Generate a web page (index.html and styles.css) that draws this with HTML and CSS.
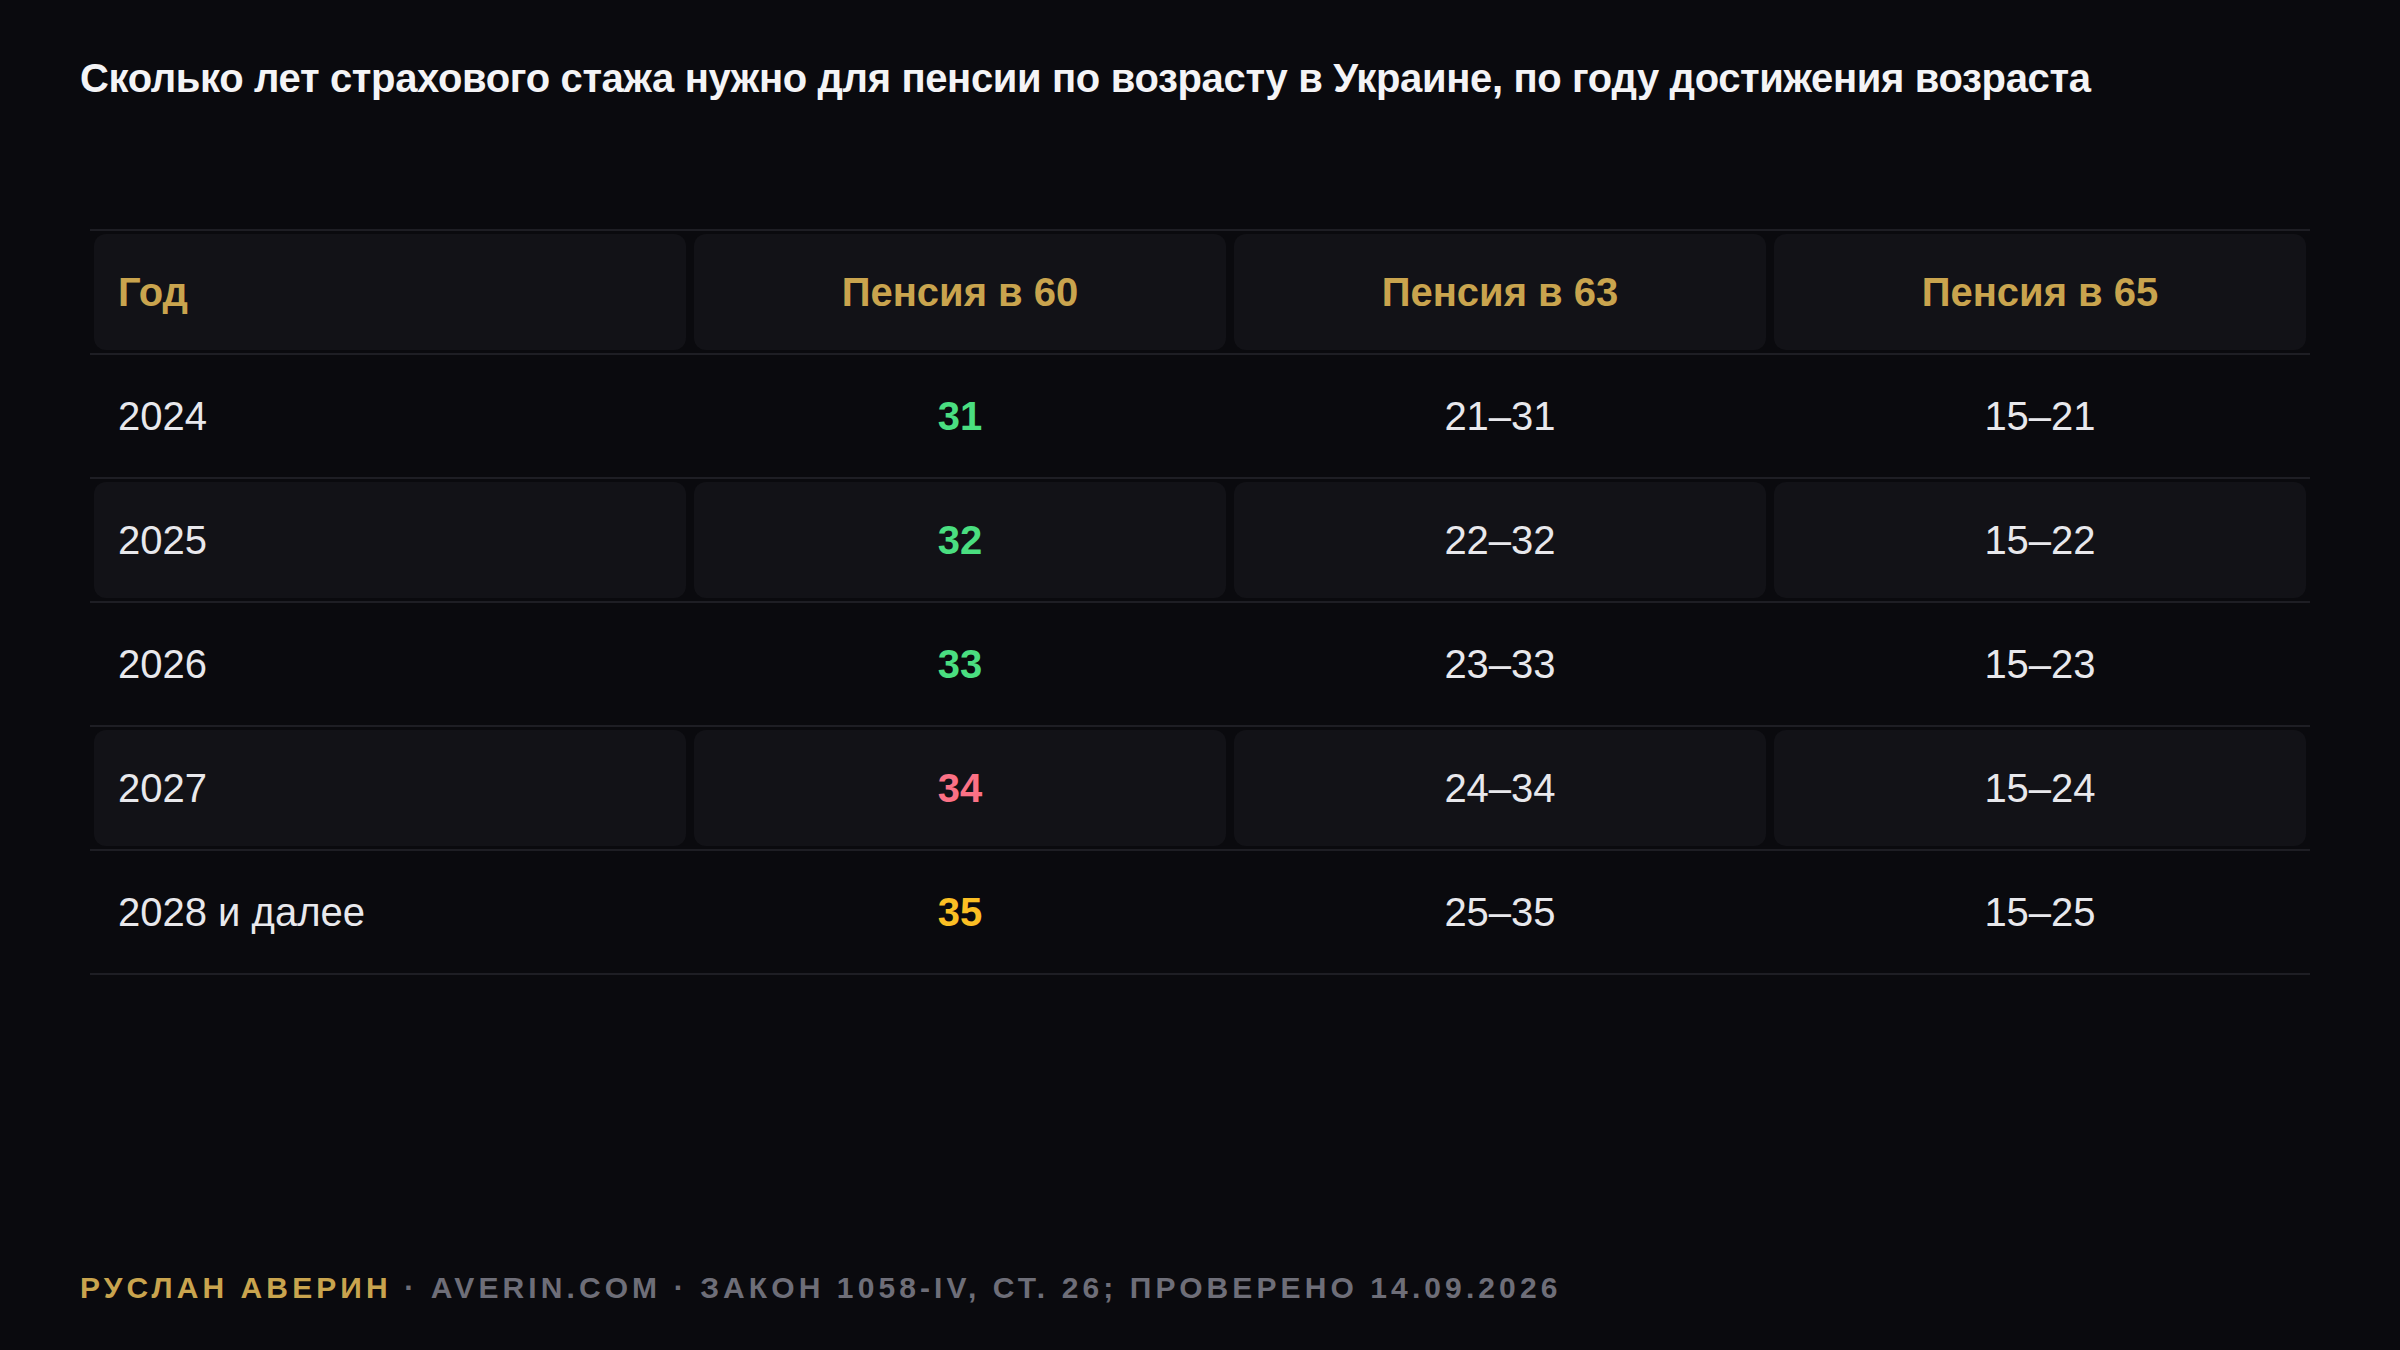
FILE: index.html
```html
<!DOCTYPE html>
<html lang="ru">
<head>
<meta charset="utf-8">
<title>Страховой стаж</title>
<link rel="stylesheet" href="styles.css">
</head>
<body>
<div class="page">
  <h1 class="title">Сколько лет страхового стажа нужно для пенсии по возрасту в Украине, по году достижения возраста</h1>
  <div class="table">
    <div class="row shaded head">
      <div class="cell first">Год</div>
      <div class="cell">Пенсия в 60</div>
      <div class="cell">Пенсия в 63</div>
      <div class="cell">Пенсия в 65</div>
    </div>
    <div class="row">
      <div class="cell first">2024</div>
      <div class="cell num green">31</div>
      <div class="cell">21–31</div>
      <div class="cell">15–21</div>
    </div>
    <div class="row shaded">
      <div class="cell first">2025</div>
      <div class="cell num green">32</div>
      <div class="cell">22–32</div>
      <div class="cell">15–22</div>
    </div>
    <div class="row">
      <div class="cell first">2026</div>
      <div class="cell num green">33</div>
      <div class="cell">23–33</div>
      <div class="cell">15–23</div>
    </div>
    <div class="row shaded">
      <div class="cell first">2027</div>
      <div class="cell num red">34</div>
      <div class="cell">24–34</div>
      <div class="cell">15–24</div>
    </div>
    <div class="row">
      <div class="cell first">2028 и далее</div>
      <div class="cell num yellow">35</div>
      <div class="cell">25–35</div>
      <div class="cell">15–25</div>
    </div>
  </div>
  <div class="footer"><span class="author">РУСЛАН АВЕРИН</span> · AVERIN.COM · ЗАКОН 1058-IV, СТ. 26; ПРОВЕРЕНО 14.09.2026</div>
</div>
</body>
</html>
```

FILE: styles.css
```css
* { box-sizing: border-box; }
html, body {
  margin: 0;
  padding: 0;
  background: #0a0a0e;
}
body {
  font-family: "Liberation Sans", Arial, sans-serif;
  color: #e8e8ec;
}
.page {
  width: 2400px;
  height: 1350px;
  padding: 54px 80px 45px 80px;
  display: flex;
  flex-direction: column;
}
.title {
  margin: 0;
  font-size: 40px;
  line-height: 48px;
  font-weight: 700;
  letter-spacing: -0.35px;
  color: #f4f4f6;
}
.table {
  margin: 127px 10px 0 10px;
  border-top: 2px solid #1e1e24;
}
.row {
  display: grid;
  grid-template-columns: 592px 532px 532px 532px;
  column-gap: 8px;
  padding: 3px 4px;
  border-bottom: 2px solid #1e1e24;
}
.cell {
  height: 116px;
  display: flex;
  align-items: center;
  justify-content: center;
  font-size: 40px;
  border-radius: 12px;
  color: #e8e8ec;
}
.cell.first {
  justify-content: flex-start;
  padding-left: 24px;
}
.shaded .cell {
  background: #121217;
}
.head .cell {
  color: #c9a44e;
  font-weight: 700;
}
.num { font-weight: 700; }
.green { color: #4ade80; }
.red { color: #fb7185; }
.yellow { color: #fbbf24; }
.footer {
  margin-top: auto;
  font-size: 30px;
  line-height: 34px;
  font-weight: 700;
  letter-spacing: 4.1px;
  color: #6e6e78;
}
.author { color: #c9a44e; }
```
